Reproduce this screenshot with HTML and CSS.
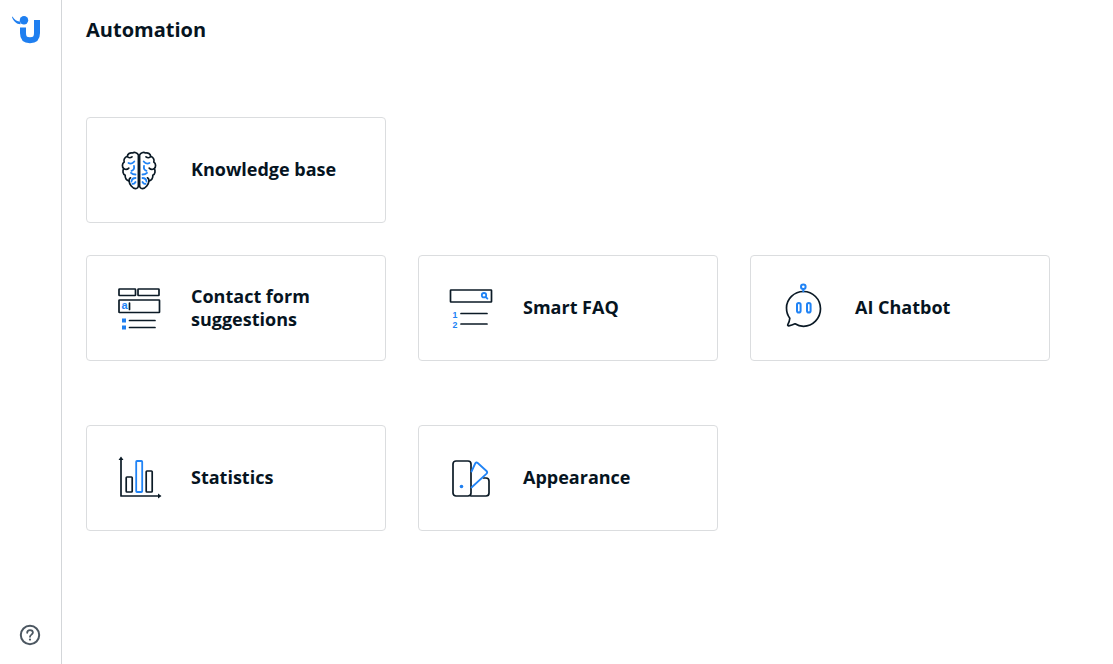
FILE: index.html
```html
<!DOCTYPE html>
<html lang="en">
<head>
  <meta charset="UTF-8">
  <title>Automation</title>
  <link rel="stylesheet" href="styles.css">
</head>
<body>
  <aside class="sidebar">
    <svg class="logo" width="30" height="30" viewBox="0 0 30 30" fill="none">
      <path class="blue-fill" d="M0.5 1.5 C2 4.5 5 6.5 8.5 6.5 L8.5 9.2 C4.5 9.2 1.2 6 0 2 Z"/>
      <circle class="blue-fill" cx="12" cy="5.2" r="4.2"/>
      <path class="logo-u" d="M11 12.5 V18 C11 23 13 25.2 18 25.2 C23 25.2 25 23 25 18 V5"/>
    </svg>
    <svg class="help" width="22" height="22" viewBox="0 0 22 22" fill="none">
      <circle cx="11" cy="11" r="9.2" stroke="#4c5761" stroke-width="2"/>
      <path d="M8.2 8.8 C8.2 7.1 9.4 6.1 11 6.1 C12.7 6.1 13.9 7.1 13.9 8.6 C13.9 10.6 11 10.7 11 12.8" stroke="#4c5761" stroke-width="1.8" stroke-linecap="round"/>
      <circle cx="11" cy="15.6" r="1.1" fill="#4c5761"/>
    </svg>
  </aside>

  <main class="content">
    <h1 class="title">Automation</h1>

    <section class="group">
      <a class="card">
        <svg class="icon" width="50" height="50" viewBox="0 0 50 50" fill="none">
          <g id="brain-half">
            <g class="dark">
              <path d="M24.4 10 C23.5 7.8 20.5 6.8 18.5 8 C16 7.3 13.5 9 13.3 11.5 C10.8 12 9.3 14.7 10.2 17 C8 18.5 7.8 22 9.8 23.6 C8.3 25.8 8.8 29 11.2 30.3 C10.8 33 12.5 35.5 15 35.8 C15.3 39.5 18.5 43.5 21.5 43.6 C23.3 43.7 24.4 42.3 24.4 40.5 Z"/>
              <path d="M13.3 11.5 C14.5 13 16.5 13 18 11.8 M9.8 23.6 C11.5 24.8 13.5 24.5 14.8 23.2 M15 35.8 C15 34.5 15.5 33.5 16.5 32.8"/>
            </g>
            <g class="blue">
              <path d="M14.5 18 C16.5 19 18.8 18.5 20.3 16.5 M20 21 C20.5 23.5 19.5 25.2 17.5 25.8 M21.5 29.5 C19.8 29.5 18.2 29 17 27.8 M21.5 33 C19.5 33 17.8 34.2 17.5 36.5 M21.5 37 C20.5 39 19.5 39.2 18.5 38.8"/>
            </g>
          </g>
          <g transform="matrix(-1 0 0 1 50 0)">
            <g class="dark">
              <path d="M24.4 10 C23.5 7.8 20.5 6.8 18.5 8 C16 7.3 13.5 9 13.3 11.5 C10.8 12 9.3 14.7 10.2 17 C8 18.5 7.8 22 9.8 23.6 C8.3 25.8 8.8 29 11.2 30.3 C10.8 33 12.5 35.5 15 35.8 C15.3 39.5 18.5 43.5 21.5 43.6 C23.3 43.7 24.4 42.3 24.4 40.5 Z"/>
              <path d="M13.3 11.5 C14.5 13 16.5 13 18 11.8 M9.8 23.6 C11.5 24.8 13.5 24.5 14.8 23.2 M15 35.8 C15 34.5 15.5 33.5 16.5 32.8"/>
            </g>
            <g class="blue">
              <path d="M14.5 18 C16.5 19 18.8 18.5 20.3 16.5 M20 21 C20.5 23.5 19.5 25.2 17.5 25.8 M21.5 29.5 C19.8 29.5 18.2 29 17 27.8 M21.5 33 C19.5 33 17.8 34.2 17.5 36.5 M21.5 37 C20.5 39 19.5 39.2 18.5 38.8"/>
            </g>
          </g>
        </svg>
        <span class="label">Knowledge base</span>
      </a>
    </section>

    <section class="group">
      <a class="card">
        <svg class="icon" width="50" height="50" viewBox="0 0 50 50" fill="none">
          <g class="dark">
            <rect x="5" y="6" width="16.5" height="6.5" rx="0.5"/>
            <rect x="24" y="6" width="21" height="6.5" rx="0.5"/>
            <rect x="5" y="17" width="40.5" height="12.5" rx="0.5"/>
            <path d="M15.5 20 V26.5 M15.5 37.5 H41 M15.5 44.5 H41"/>
          </g>
          <text class="glyph glyph-a" x="7.5" y="26">a</text>
          <rect class="blue-fill" x="8" y="35.5" width="4" height="4"/>
          <rect class="blue-fill" x="8" y="42.5" width="4" height="4"/>
        </svg>
        <span class="label">Contact form<br>suggestions</span>
      </a>
      <a class="card">
        <svg class="icon" width="50" height="50" viewBox="0 0 50 50" fill="none">
          <g class="dark">
            <rect x="4.5" y="7" width="41" height="12" rx="0.5"/>
            <path d="M15 30.5 H41 M15 41 H41"/>
          </g>
          <g class="blue">
            <circle cx="38" cy="12.2" r="2.2"/>
            <path d="M39.6 13.8 L41.4 15.6"/>
          </g>
          <text class="glyph" x="6.5" y="34.5">1</text>
          <text class="glyph" x="6.5" y="44.5">2</text>
        </svg>
        <span class="label">Smart FAQ</span>
      </a>
      <a class="card">
        <svg class="icon" width="50" height="50" viewBox="0 0 50 50" fill="none">
          <path class="dark" d="M25.5 8.5 C16 8.5 8.5 16 8.5 25 C8.5 29 9.7 32.5 11.8 35.2 C11.6 37.5 11 39.6 9.8 41.6 C9.4 42.4 10 42.9 10.8 42.8 C13.2 42.4 15.3 41.6 17 40.8 C19.2 42.2 22.2 43.3 25.5 43.3 C34.8 43.3 42.5 35.3 42.5 25.8 C42.5 16 34.8 8.5 25.5 8.5"/>
          <g class="blue thick">
            <circle cx="25.3" cy="3.7" r="2.3"/>
            <path d="M25.3 6.2 V8.5"/>
            <rect x="19" y="20" width="3.6" height="9.6" rx="1.8"/>
            <rect x="29" y="20" width="3.6" height="9.6" rx="1.8"/>
          </g>
        </svg>
        <span class="label">AI Chatbot</span>
      </a>
    </section>

    <section class="group">
      <a class="card">
        <svg class="icon" width="50" height="50" viewBox="0 0 50 50" fill="none">
          <g class="dark">
            <path d="M7 6 V43 H45"/>
            <rect x="12.2" y="24" width="6" height="15" rx="0.8"/>
            <rect x="32.2" y="18" width="6" height="21" rx="0.8"/>
          </g>
          <path class="dark-fill" d="M7 3.5 L9.5 7 H4.5 Z M47.5 43 L44 40.5 V45.5 Z"/>
          <rect class="blue" x="22.2" y="8" width="6" height="31" rx="0.8"/>
        </svg>
        <span class="label">Statistics</span>
      </a>
      <a class="card">
        <svg class="icon" width="50" height="50" viewBox="0 0 50 50" fill="none">
          <g class="dark">
            <rect x="7" y="8" width="18" height="35" rx="3"/>
            <path d="M25 43 H40 C42 43 43 42 43 40 V28 C43 26 42 25 40 25 H37.5"/>
          </g>
          <path class="blue" d="M25.5 18.5 L29.2 10.5 C29.8 9.3 30.8 9.2 31.7 10 L40.5 18 C41.4 18.9 41.4 19.8 40.6 20.7 L25.5 34.5"/>
          <circle class="blue-fill" cx="15.5" cy="33.5" r="1.8"/>
        </svg>
        <span class="label">Appearance</span>
      </a>
    </section>
  </main>
</body>
</html>
```

FILE: styles.css
```css
/* Base */
* { margin: 0; padding: 0; box-sizing: border-box; }
html, body { height: 100%; }
body {
  display: flex;
  background: #fff;
  color: #06141f;
  font-family: "Open Sans", "Noto Sans", sans-serif;
  overflow: hidden;
}

/* Sidebar */
.sidebar {
  flex: none;
  width: 62px;
  height: 100%;
  border-right: 1px solid #d3d6d9;
  display: flex;
  flex-direction: column;
  align-items: flex-start;
  justify-content: space-between;
  padding: 15px 0 18px;
}
.logo { margin-left: 12px; }
.logo-u {
  stroke: #1f7ff0;
  stroke-width: 6;
}
.help { margin-left: 19px; }

/* Content */
.content {
  flex: 1;
  padding: 17px 24px 0;
}
.title {
  font-size: 20px;
  line-height: 26px;
  font-weight: 700;
  margin-bottom: 74px;
}
.group {
  display: flex;
  gap: 32px;
  margin-bottom: 32px;
}
.group:last-child { margin-top: 64px; }
.card {
  flex: none;
  width: 300px;
  height: 106px;
  display: flex;
  align-items: center;
  gap: 27px;
  padding-left: 28px;
  background: #fff;
  border: 1px solid #dbdddf;
  border-radius: 4px;
  cursor: pointer;
}
.label {
  font-size: 18px;
  line-height: 23px;
  font-weight: 700;
  margin-bottom: 1px;
}
.icon { flex: none; margin-left: -1px; }

/* Icon strokes */
.dark {
  stroke: #0b1a26;
  stroke-width: 1.7;
  stroke-linecap: round;
  stroke-linejoin: round;
}
.blue {
  stroke: #2083f5;
  stroke-width: 1.8;
  stroke-linecap: round;
  stroke-linejoin: round;
}
.thick { stroke-width: 2; }
.blue-fill { fill: #1f7ff0; }
.dark-fill { fill: #0b1a26; }
.glyph {
  fill: #2083f5;
  font-family: "Liberation Sans", sans-serif;
  font-size: 8.8px;
  font-weight: 700;
}
.glyph-a { font-size: 11px; }
```
